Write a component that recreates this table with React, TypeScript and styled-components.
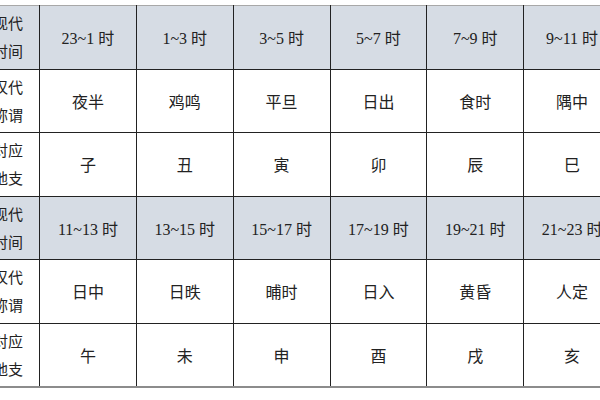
import React from 'react'
import styled, { createGlobalStyle } from 'styled-components'

const GlobalStyle = createGlobalStyle`
  html, body {
    margin: 0;
    padding: 0;
    background: #ffffff;
  }
`

const Frame = styled.div`
  width: 600px;
  height: 400px;
  overflow: hidden;
  padding-top: 5px;
  box-sizing: border-box;
`

const Table = styled.table`
  margin-left: -23px;
  border-collapse: collapse;
  table-layout: fixed;
  width: 644px;
  font-family: "Liberation Serif", "Noto Sans CJK SC", serif;
  font-size: 16px;
  color: #222;
  border-top: 1px solid #a8a8a8;
  border-bottom: 2px solid #8c8c8c;
`

const Row = styled.tr<{ $head?: boolean }>`
  background: ${(p) => (p.$head ? '#d6dce4' : '#ffffff')};
`

const Label = styled.td`
  width: 62px;
  height: 62.5px;
  padding: 0;
  text-align: center;
  line-height: 28px;
  font-size: 15px;
  font-family: "Noto Sans CJK SC", sans-serif;
  border-right: 1px solid #222;
  border-bottom: 1px solid #222;
`

const Cell = styled.td`
  width: 95.8px;
  height: 62.5px;
  padding: 0;
  text-align: center;
  border: 1px solid #222;
  border-top: none;
`

const HEAD = ['现代', '时间']
const NAME = ['汉代', '称谓']
const BRANCH = ['对应', '地支']

const blocks = [
  {
    hours: ['23~1 时', '1~3 时', '3~5 时', '5~7 时', '7~9 时', '9~11 时'],
    names: ['夜半', '鸡鸣', '平旦', '日出', '食时', '隅中'],
    branches: ['子', '丑', '寅', '卯', '辰', '巳'],
  },
  {
    hours: ['11~13 时', '13~15 时', '15~17 时', '17~19 时', '19~21 时', '21~23 时'],
    names: ['日中', '日昳', '晡时', '日入', '黄昏', '人定'],
    branches: ['午', '未', '申', '酉', '戌', '亥'],
  },
]

const LabelText = ({ lines }: { lines: string[] }) => (
  <Label>
    {lines[0]}
    <br />
    {lines[1]}
  </Label>
)

export default function App() {
  return (
    <Frame>
      <GlobalStyle />
      <Table>
        <tbody>
          {blocks.map((b, i) => (
            <React.Fragment key={i}>
              <Row $head>
                <LabelText lines={HEAD} />
                {b.hours.map((h) => <Cell key={h}>{h}</Cell>)}
              </Row>
              <Row>
                <LabelText lines={NAME} />
                {b.names.map((n) => <Cell key={n}>{n}</Cell>)}
              </Row>
              <Row>
                <LabelText lines={BRANCH} />
                {b.branches.map((c) => <Cell key={c}>{c}</Cell>)}
              </Row>
            </React.Fragment>
          ))}
        </tbody>
      </Table>
    </Frame>
  )
}
